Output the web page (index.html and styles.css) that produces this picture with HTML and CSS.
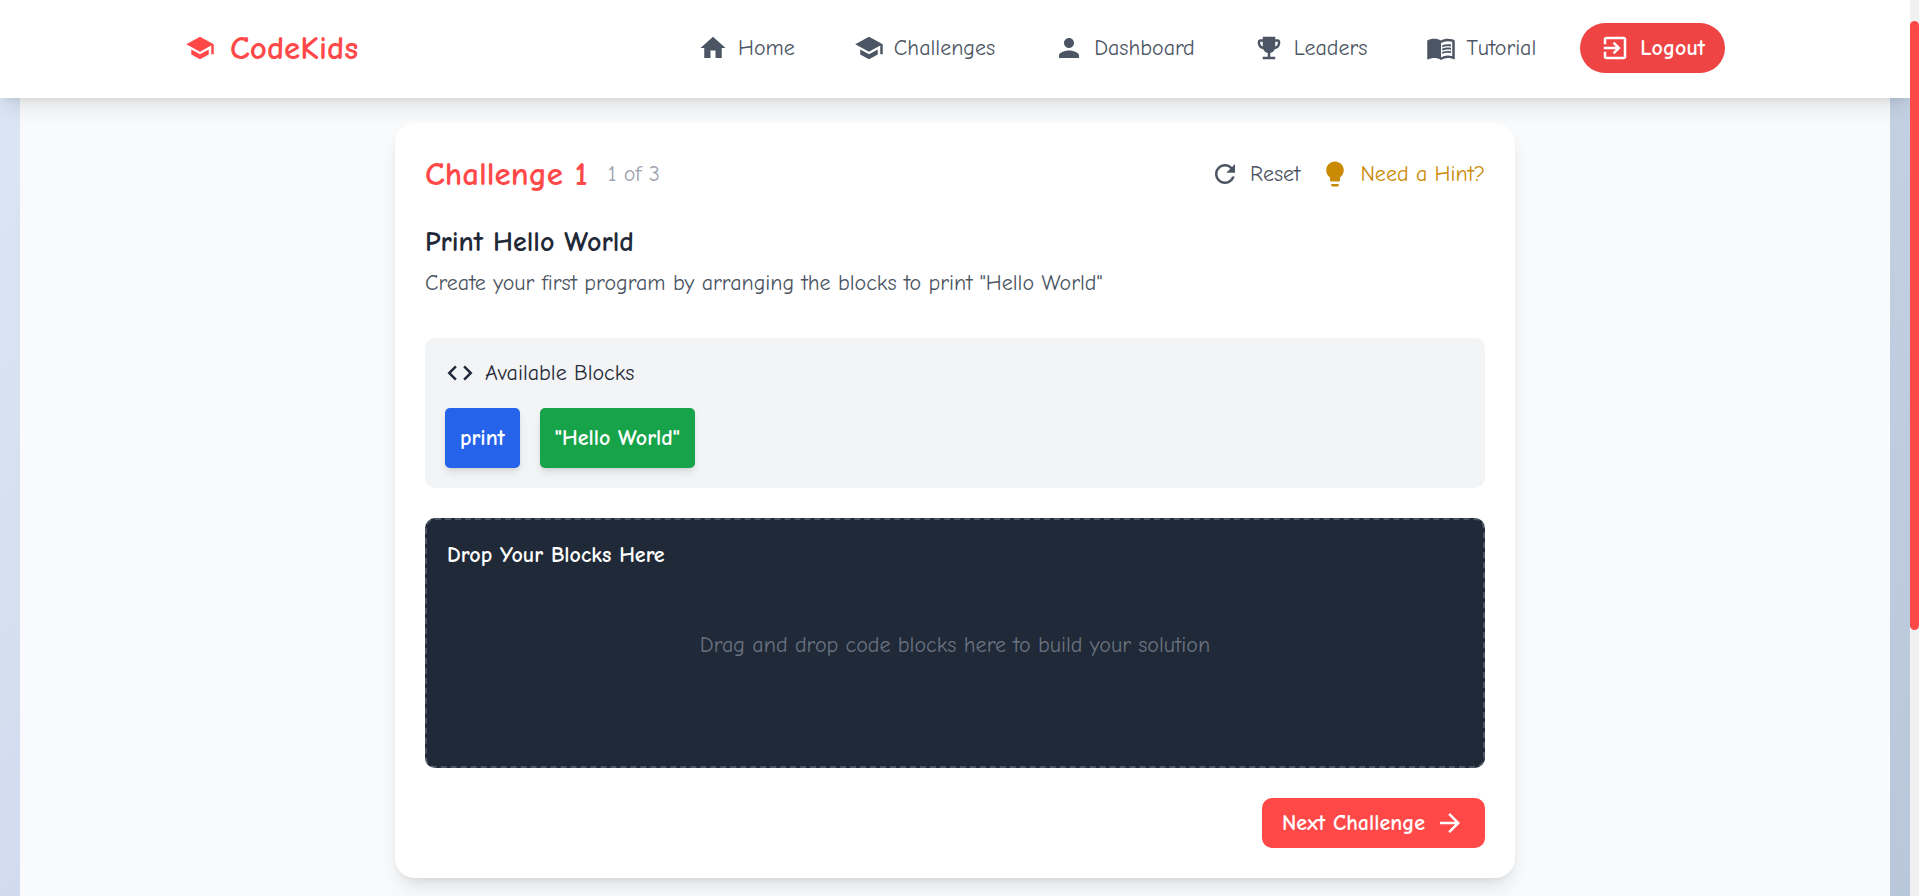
FILE: index.html
```html
<!DOCTYPE html>
<html lang="en">
<head>
<meta charset="utf-8">
<meta name="viewport" content="width=device-width, initial-scale=1">
<title>CodeKids</title>
<link rel="stylesheet" href="styles.css">
</head>
<body>
<header class="navbar">
  <div class="navbar-inner">
    <a class="brand" href="#">
      <svg class="icon" viewBox="0 0 24 24"><path d="M5 13.18v4L12 21l7-3.82v-4L12 17l-7-3.820zM12 3 1 9l11 6 9-4.910V17h2V9L12 3z"/></svg>
      CodeKids
    </a>
    <nav class="nav">
      <a class="nav-link" href="#"><svg class="icon" viewBox="0 0 24 24"><path d="M10 20v-6h4v6h5v-8h3L12 3 2 12h3v8z"/></svg>Home</a>
      <a class="nav-link" href="#"><svg class="icon" viewBox="0 0 24 24"><path d="M5 13.18v4L12 21l7-3.82v-4L12 17l-7-3.820zM12 3 1 9l11 6 9-4.910V17h2V9L12 3z"/></svg>Challenges</a>
      <a class="nav-link" href="#"><svg class="icon" viewBox="0 0 24 24"><path d="M12 12c2.210 0 4-1.790 4-4s-1.790-4-4-4-4 1.790-4 4 1.790 4 4 4zm0 2c-2.670 0-8 1.340-8 4v2h16v-2c0-2.660-5.330-4-8-4z"/></svg>Dashboard</a>
      <a class="nav-link" href="#"><svg class="icon" viewBox="0 0 24 24"><path d="M19 5h-2V3H7v2H5c-1.100 0-2 .9-2 2v1c0 2.550 1.920 4.630 4.390 4.940.63 1.500 1.980 2.630 3.610 2.960V19H7v2h10v-2h-4v-3.100c1.630-.33 2.980-1.460 3.610-2.960C19.080 12.630 21 10.550 21 8V7c0-1.100-.9-2-2-2zM5 8V7h2v3.820C5.840 10.400 5 9.300 5 8zm14 0c0 1.300-.84 2.400-2 2.820V7h2v1z"/></svg>Leaders</a>
      <a class="nav-link" href="#"><svg class="icon" viewBox="0 0 24 24"><path d="M21 5c-1.110-.35-2.330-.5-3.500-.5-1.950 0-4.050.4-5.500 1.500-1.450-1.100-3.550-1.500-5.500-1.500S2.450 4.900 1 6v14.650c0 .25.25.5.5.5.1 0 .15-.05.25-.05C3.100 20.450 5.050 20 6.500 20c1.950 0 4.050.4 5.500 1.500 1.350-.85 3.800-1.500 5.500-1.500 1.650 0 3.350.3 4.750 1.050.1.05.15.05.25.05.25 0 .5-.25.5-.5V6c-.6-.45-1.250-.75-2-1zm0 13.500c-1.100-.35-2.300-.5-3.500-.5-1.700 0-4.150.65-5.500 1.500V8c1.350-.85 3.800-1.500 5.500-1.500 1.200 0 2.400.15 3.500.5v11.500z"/><path d="M17.500 10.500c.88 0 1.730.09 2.500.26V9.240c-.79-.15-1.640-.24-2.500-.24-1.700 0-3.240.29-4.500.83v1.660c1.130-.64 2.700-.99 4.500-.99zM13 12.490v1.660c1.130-.64 2.700-.99 4.500-.99.88 0 1.730.09 2.500.26V11.900c-.79-.15-1.640-.24-2.500-.24-1.700 0-3.240.3-4.500.83zM17.500 14.330c-1.700 0-3.240.29-4.500.83v1.660c1.130-.64 2.700-.99 4.500-.99.88 0 1.730.09 2.500.26v-1.520c-.79-.16-1.640-.24-2.500-.24z"/></svg>Tutorial</a>
      <button class="logout" type="button"><svg class="icon" viewBox="0 0 24 24"><path d="M10.090 15.590 11.500 17l5-5-5-5-1.410 1.410L12.670 11H3v2h9.670l-2.580 2.590zM19 3H5c-1.110 0-2 .9-2 2v4h2V5h14v14H5v-4H3v4c0 1.100.89 2 2 2h14c1.100 0 2-.9 2-2V5c0-1.100-.9-2-2-2z"/></svg>Logout</button>
    </nav>
  </div>
</header>

<main class="page">
  <section class="card">
    <div class="card-head">
      <div class="card-heading">
        <h1 class="challenge">Challenge 1</h1>
        <span class="progress">1 of 3</span>
      </div>
      <div class="tools">
        <button class="tool" type="button"><svg class="icon" viewBox="0 0 24 24"><path d="M17.650 6.350C16.200 4.900 14.210 4 12 4c-4.420 0-7.990 3.580-7.990 8s3.570 8 7.990 8c3.730 0 6.840-2.550 7.730-6h-2.080c-.82 2.330-3.040 4-5.650 4-3.310 0-6-2.690-6-6s2.690-6 6-6c1.660 0 3.140.69 4.220 1.780L13 11h7V4l-2.350 2.350z"/></svg>Reset</button>
        <button class="tool tool-hint" type="button"><svg class="icon" viewBox="0 0 24 24"><path d="M9 21c0 .5.4 1 1 1h4c.6 0 1-.5 1-1v-1H9v1zm3-19C8.100 2 5 5.100 5 9c0 2.400 1.200 4.500 3 5.700V17c0 .5.4 1 1 1h6c.6 0 1-.5 1-1v-2.300c1.800-1.300 3-3.400 3-5.700 0-3.900-3.100-7-7-7z"/></svg>Need a Hint?</button>
      </div>
    </div>

    <h2 class="title">Print Hello World</h2>
    <p class="description">Create your first program by arranging the blocks to print "Hello World"</p>

    <div class="palette">
      <h3 class="palette-title"><svg class="icon" viewBox="0 0 24 24"><path d="M9.400 16.600 4.800 12l4.600-4.600L8 6l-6 6 6 6 1.400-1.400zm5.200 0 4.600-4.600-4.600-4.600L16 6l6 6-6 6-1.400-1.400z"/></svg>Available Blocks</h3>
      <div class="blocks">
        <div class="block block-function" draggable="true">print</div>
        <div class="block block-string" draggable="true">"Hello World"</div>
      </div>
    </div>

    <div class="dropzone">
      <h3 class="dropzone-title">Drop Your Blocks Here</h3>
      <p class="placeholder">Drag and drop code blocks here to build your solution</p>
    </div>

    <div class="card-foot">
      <button class="next" type="button">Next Challenge<svg class="icon" viewBox="0 0 24 24"><path d="m12 4-1.410 1.410L16.170 11H4v2h12.170l-5.580 5.590L12 20l8-8z"/></svg></button>
    </div>
  </section>
</main>
<div class="scroll-track"><div class="scroll-thumb"></div></div>
</body>
</html>
```
FILE: styles.css
```css
* {
  box-sizing: border-box;
}

body {
  margin: 0;
  padding-right: 9px;
  min-height: 100vh;
  display: flex;
  flex-direction: column;
  background: linear-gradient(135deg, #dbe7f6 0%, #cbd7e9 50%, #b9c7da 100%);
  color: #1f2937;
  font-family: "Comic Neue", "Comic Sans MS", "Open Sans", sans-serif;
  font-size: 22px;
  line-height: 30px;
}

h1, h2, h3, p {
  margin: 0;
}

button {
  border: 0;
  padding: 0;
  background: none;
  color: inherit;
  font: inherit;
  cursor: pointer;
}

a {
  color: inherit;
  text-decoration: none;
}

.icon {
  width: 30px;
  height: 30px;
  flex: none;
  fill: currentColor;
}

.navbar {
  position: relative;
  z-index: 1;
  padding: 23px 30px 25px;
  background: #fff;
  box-shadow: 0 12px 20px -4px rgba(0, 0, 0, .1), 0 5px 8px -5px rgba(0, 0, 0, .1);
}

.navbar-inner {
  max-width: 1540px;
  margin: 0 auto;
  display: flex;
  align-items: center;
  justify-content: space-between;
}

.brand {
  display: flex;
  align-items: center;
  gap: 15px;
  color: #ff4949;
  font-size: 33px;
  font-weight: 700;
}

.nav {
  display: flex;
  align-items: center;
  gap: 19px;
  color: #4b5563;
}

.nav-link {
  display: flex;
  align-items: center;
  gap: 10px;
  padding: 10px 20px;
}

.nav-link:nth-last-child(2) {
  margin-right: 5px;
}

.logout {
  display: flex;
  align-items: center;
  gap: 10px;
  padding: 10px 20px;
  border-radius: 25px;
  background: #ef4444;
  color: #fff;
  font-weight: 700;
}

.page {
  flex: 1;
  margin: 0 20px;
  padding: 25px 20px 18px;
  background: #f9fafc;
}

.card {
  max-width: 1120px;
  margin: 0 auto;
  padding: 30px;
  border-radius: 20px;
  background: #fff;
  box-shadow: 0 12px 20px -4px rgba(0, 0, 0, .1), 0 5px 8px -5px rgba(0, 0, 0, .1);
}

.card-head,
.card-heading,
.tools,
.tool {
  display: flex;
  align-items: center;
}

.card-head {
  justify-content: space-between;
  margin-bottom: 30px;
}

.card-heading,
.tools {
  gap: 20px;
}

.challenge {
  color: #ff4949;
  font-size: 33px;
  line-height: 42px;
}

.progress {
  color: #9ca3af;
}

.tool {
  gap: 10px;
  color: #4b5563;
}

.tool-hint {
  color: #ca8a04;
}

.title {
  margin-bottom: 8px;
  font-size: 28px;
  line-height: 35px;
}

.description {
  margin-bottom: 40px;
  color: #4b5563;
}

.palette {
  margin-bottom: 30px;
  padding: 20px;
  border-radius: 10px;
  background: #f3f4f6;
}

.palette-title {
  display: flex;
  align-items: center;
  gap: 10px;
  margin-bottom: 20px;
  font-size: 22px;
  font-weight: 400;
}

.blocks {
  display: flex;
  gap: 20px;
}

.block {
  padding: 15px;
  border-radius: 5px;
  color: #fff;
  font-weight: 700;
  box-shadow: 0 5px 8px -1px rgba(0, 0, 0, .1), 0 2px 5px -2px rgba(0, 0, 0, .1);
  cursor: move;
}

.block-function {
  background: #2563eb;
}

.block-string {
  background: #16a34a;
}

.dropzone {
  min-height: 250px;
  margin-bottom: 30px;
  padding: 20px;
  border: 2px dashed #4b5563;
  border-radius: 10px;
  background: #1f2937;
}

.dropzone-title {
  margin-bottom: 60px;
  color: #fff;
  font-size: 22px;
  font-weight: 700;
}

.placeholder {
  color: #6b7280;
  text-align: center;
}

.card-foot {
  display: flex;
  justify-content: flex-end;
}

.next {
  display: flex;
  align-items: center;
  gap: 10px;
  padding: 10px 20px;
  border-radius: 10px;
  background: #ff4949;
  color: #fff;
  font-weight: 700;
}

.scroll-track {
  position: fixed;
  z-index: 2;
  top: 0;
  right: 0;
  bottom: 0;
  width: 9px;
  padding-top: 21px;
  background: #f1f1f1;
}

.scroll-thumb {
  height: 68vh;
  border-radius: 5px;
  background: #ff4949;
}
```
